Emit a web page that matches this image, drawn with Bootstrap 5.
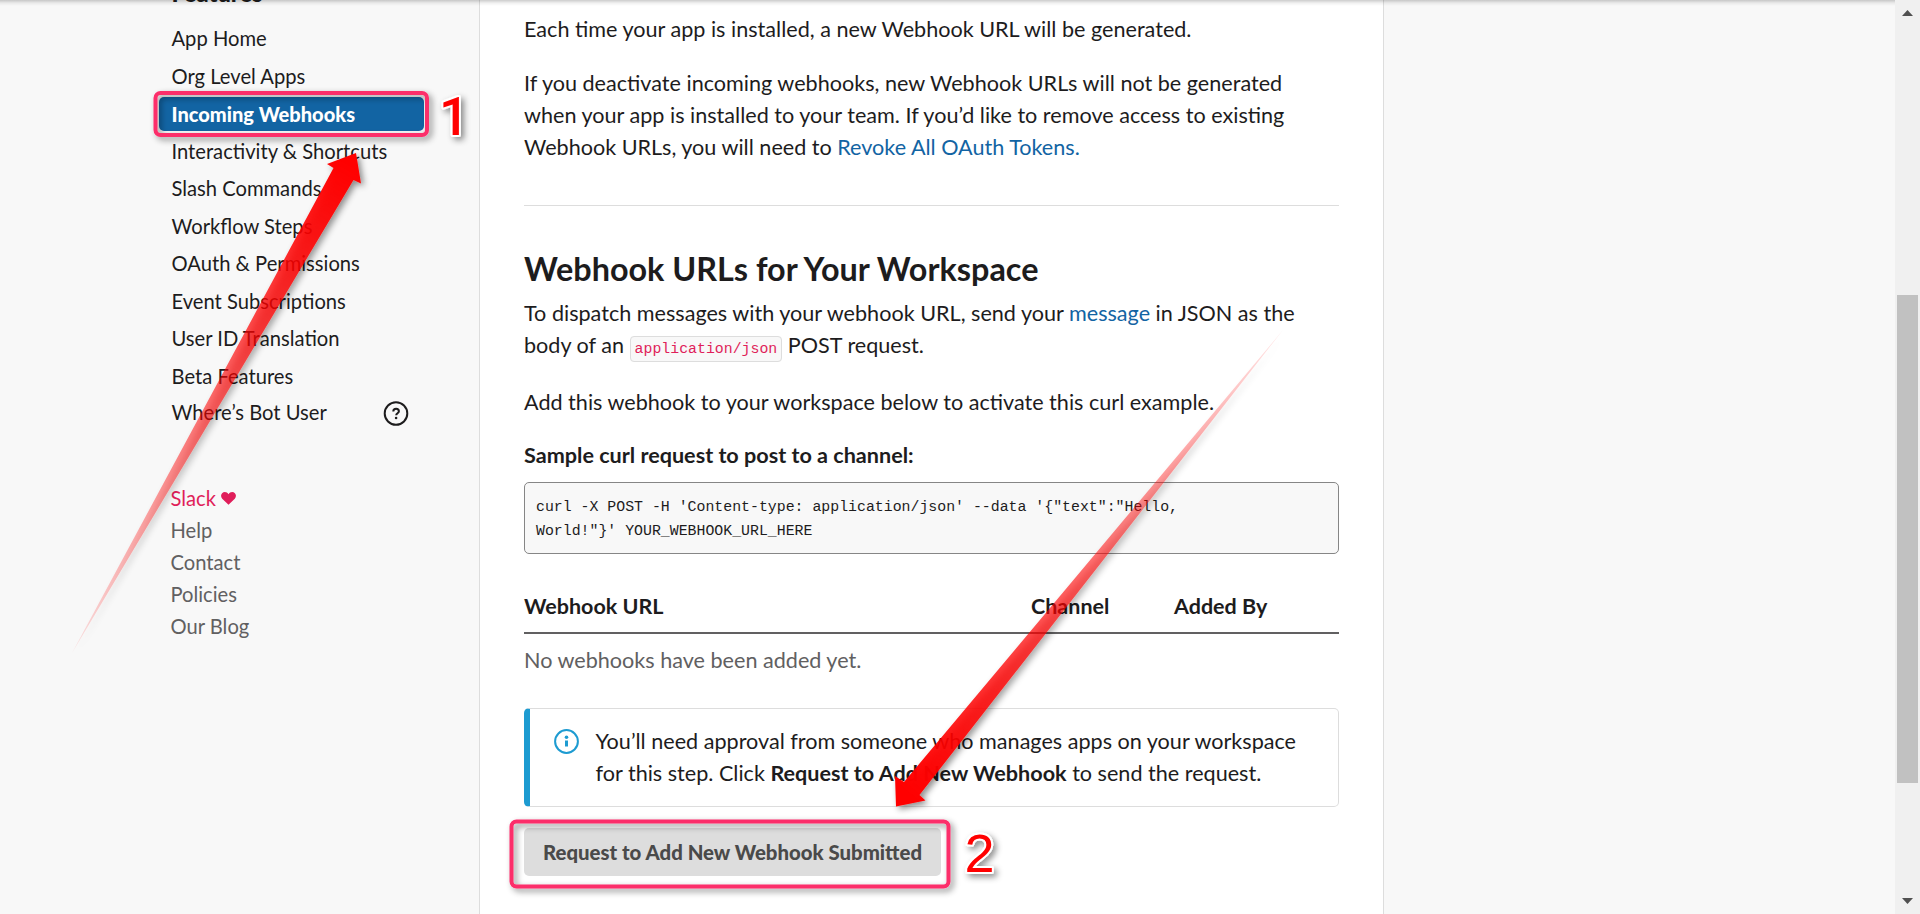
<!DOCTYPE html>
<html lang="en">
<head>
<meta charset="utf-8">
<meta name="viewport" content="width=device-width, initial-scale=1">
<title>Incoming Webhooks</title>
<link href="https://cdn.jsdelivr.net/npm/bootstrap@5.3.0/dist/css/bootstrap.min.css" rel="stylesheet">
<script src="https://cdn.jsdelivr.net/npm/bootstrap@5.3.0/dist/js/bootstrap.bundle.min.js"></script>
<style>
  body { font-family: Lato, "Liberation Sans", sans-serif; font-size: 21.6px; line-height: 32px; color: #1d1c1d; background: #f8f8f8; }
  a { color: #1264a3; text-decoration: none; }
  .app-view { height: 914px; }
  .top-shade { height: 6px; background: linear-gradient(rgba(0,0,0,.2), rgba(0,0,0,.06) 50%, rgba(0,0,0,0)); width: 1895px; }

  /* sidebar */
  .side-col { width: 479px; padding-left: 159px; }
  .side-heading { font-size: 23.7px; font-weight: 900; height: 23px; margin-top: -23px; padding-left: 12.5px; }
  .side-nav { width: 264.5px; font-size: 20.18px; padding-top: 21px; }
  .side-nav .nav-link { color: #1d1c1d; height: 34px; line-height: 35.5px; padding: 0 12.5px; margin-bottom: 3.5px; border-radius: 5px; }
  .side-nav .nav-link.active { color: #fff; background: #1264a3; font-weight: 900; font-size: 20.05px; line-height: 35px; margin-top: 1px; margin-bottom: 2.5px; }
  .side-nav svg { margin-right: 2px; position: relative; top: 1px; }
  .side-foot { padding-left: 11.5px; margin-top: 48px; font-size: 20.16px; }
  .side-foot a { color: #616061; }
  .side-foot .love { color: #e01e5a; }
  .side-foot svg { margin: 2px 0 0 5px; }

  /* content panel */
  .main-panel { width: 905px; padding: 13px 44px 0; background: #fff; border: solid #ddd; border-width: 0 1px; }
  .main-panel p { margin-bottom: 22px; }
  .main-panel .divider { margin: 42px 0 41px; border-top: 1.25px solid #ddd; opacity: 1; }
  .main-panel h2 { font-size: 32.36px; font-weight: 700; line-height: 44px; margin-bottom: 6px; }
  .main-panel .intro { margin-bottom: 21px; }
  .sub-title { font-weight: 700; font-size: 21.6px; margin-top: 21px; }
  .mono { font-family: "Liberation Mono", monospace; font-size: 14.86px; }
  code.mono { color: #e01e5a; background: #f8f8f8; border: 1px solid #ddd; border-radius: 4px; padding: 4px 4px 4px; }
  pre.mono { width: 815px; height: 72px; line-height: 24px; padding: 12px 11px 10px; margin: 11px 0 36px; background: #f8f8f8; border: 1px solid #868686; border-radius: 5px; color: #1d1c1d; }
  .hook-head { font-weight: 700; font-size: 21.5px; border-bottom: 2px solid #616061; padding-bottom: 10px; }
  .hook-head .c-url { width: 507px; }
  .hook-head .c-chan { width: 143px; }
  .muted { color: #616061; margin-top: 10px; }
  .notice { height: 99px; margin-top: 32px; border: 1px solid #ddd; border-left: 6px solid #1d9bd1; border-radius: 5px; padding: 16px 0 0 24px; }
  .notice svg { margin: 4px 16.500px 0 0; }
  .btn-sent, .btn-sent:disabled { width: 417px; height: 48px; margin-top: 21px; padding: 0; background: #ddd; color: #4a4a4a; border: 0; border-radius: 5px; opacity: 1; font-size: 20.38px; font-weight: 900; line-height: 46px; }

  .scroll-track { width: 25px; background: #f0f0f0; }
  .scroll-track svg { margin: 10px 0; }
  .scroll-thumb { width: 21px; height: 488px; margin-top: 269px; background: #c1c1c1; }
  .marks text { font-family: Roboto, sans-serif; font-size: 53px; font-weight: 500; }
  .marks .step-two { font-family: "Liberation Sans", sans-serif; font-size: 54px; font-weight: 400; }
</style>
</head>
<body class="overflow-hidden">
<div class="app-view d-flex position-relative overflow-hidden">
  <aside class="side-col flex-shrink-0">
    <div class="side-heading">Features</div>
    <nav class="side-nav nav flex-column flex-nowrap">
      <a class="nav-link" href="#">App Home</a>
      <a class="nav-link" href="#">Org Level Apps</a>
      <a class="nav-link active" href="#">Incoming Webhooks</a>
      <a class="nav-link" href="#">Interactivity &amp; Shortcuts</a>
      <a class="nav-link" href="#">Slash Commands</a>
      <a class="nav-link" href="#">Workflow Steps</a>
      <a class="nav-link" href="#">OAuth &amp; Permissions</a>
      <a class="nav-link" href="#">Event Subscriptions</a>
      <a class="nav-link" href="#">User ID Translation</a>
      <a class="nav-link" href="#">Beta Features</a>
      <a class="nav-link d-flex justify-content-between align-items-center" href="#">Where’s Bot User
        <svg width="26" height="26" viewBox="0 0 26 26" fill="none" stroke="#1d1c1d"><circle cx="13" cy="12.5" r="11.3" stroke-width="2"/><path d="M10.3 10.4c0-1.7 1-2.7 2.8-2.7s2.8.9 2.8 2.5c0 2-2.7 2-2.7 4" stroke-width="2"/><circle cx="13.1" cy="17" r="1.3" fill="#1d1c1d" stroke="none"/></svg>
      </a>
    </nav>
    <div class="side-foot d-flex flex-column">
      <a class="love d-flex align-items-center" href="#">Slack <svg width="15" height="13" viewBox="0 0 15 13"><path d="M7.5 12.8 1.2 6.8C-.3 5.2-.3 2.6 1.1 1.2 2.8-.5 6-.4 7.5 2.3 9-.4 12.2-.5 13.9 1.2c1.4 1.4 1.4 4-.1 5.6z" fill="#e01e5a"/></svg></a>
      <a href="#">Help</a>
      <a href="#">Contact</a>
      <a href="#">Policies</a>
      <a href="#">Our Blog</a>
    </div>
  </aside>

  <main class="main-panel flex-shrink-0">
    <p>Each time your app is installed, a new Webhook URL will be generated.</p>
    <p>If you deactivate incoming webhooks, new Webhook URLs will not be generated<br>when your app is installed to your team. If you’d like to remove access to existing<br>Webhook URLs, you will need to <a href="#">Revoke All OAuth Tokens.</a></p>
    <hr class="divider">
    <h2>Webhook URLs for Your Workspace</h2>
    <p class="intro">To dispatch messages with your webhook URL, send your <a href="#">message</a> in JSON as the<br>body of an <code class="mono">application/json</code> POST request.</p>
    <p class="mb-0">Add this webhook to your workspace below to activate this curl example.</p>
    <div class="sub-title">Sample curl request to post to a channel:</div>
    <pre class="mono">curl -X POST -H 'Content-type: application/json' --data '{"text":"Hello,
World!"}' YOUR_WEBHOOK_URL_HERE</pre>
    <div class="hook-head d-flex"><span class="c-url">Webhook URL</span><span class="c-chan">Channel</span><span>Added By</span></div>
    <div class="muted">No webhooks have been added yet.</div>
    <div class="notice d-flex align-items-start">
      <svg width="25" height="25" viewBox="0 0 25 25" fill="none"><circle cx="12.5" cy="12.5" r="11.4" stroke="#1d9bd1" stroke-width="2"/><circle cx="12.5" cy="8.2" r="1.8" fill="#1d9bd1"/><path d="M11 11.5h3v6h-3z" fill="#1d9bd1"/></svg>
      <div class="text-nowrap">You’ll need approval from someone who manages apps on your workspace<br>for this step. Click <b>Request to Add New Webhook</b> to send the request.</div>
    </div>
    <button class="btn btn-sent d-block" disabled>Request to Add New Webhook Submitted</button>
  </main>

  <div class="scroll-track d-flex flex-column align-items-center ms-auto flex-shrink-0">
    <svg class="flex-shrink-0" width="11" height="6" viewBox="0 0 11 6"><path d="M5.5 0 11 6H0z" fill="#505050"/></svg>
    <div class="scroll-thumb flex-shrink-0"></div>
    <svg class="mt-auto flex-shrink-0" width="11" height="6" viewBox="0 0 11 6"><path d="M5.5 6 11 0H0z" fill="#505050"/></svg>
  </div>

  <div class="top-shade position-absolute top-0 start-0"></div>

  <!-- annotations drawn over the page -->
  <svg class="marks position-absolute top-0 start-0" width="1920" height="914" viewBox="0 0 1920 914">
    <defs>
      <linearGradient id="fade1" gradientUnits="userSpaceOnUse" x1="350" y1="165" x2="73" y2="651"><stop offset="0" stop-color="#f00"/><stop offset="1" stop-color="#f00" stop-opacity=".1"/></linearGradient>
      <linearGradient id="fade2" gradientUnits="userSpaceOnUse" x1="905" y1="790" x2="1281" y2="332"><stop offset="0" stop-color="#f00"/><stop offset="1" stop-color="#f00" stop-opacity=".1"/></linearGradient>
      <filter id="cast" filterUnits="userSpaceOnUse" x="0" y="0" width="1920" height="914"><feDropShadow dx="3" dy="3" stdDeviation="3" flood-color="#000" flood-opacity=".45"/></filter>
    </defs>
    <g filter="url(#cast)" fill="none" stroke="#fc2d6b" stroke-width="4">
      <rect x="155.5" y="93" width="271.5" height="42" rx="5"/>
      <rect x="511.5" y="821.5" width="437" height="65" rx="5"/>
    </g>
    <g filter="url(#cast)">
      <path d="M356 153 327 164l6.5 4L72 653 353.5 180l7.5 3.5z" fill="url(#fade1)"/>
      <path d="M896 806.5 895 776l9 6L1283 330 919.5 795l6 5.500z" fill="url(#fade2)"/>
    </g>
    <g filter="url(#cast)" fill="#f00" stroke="#fff" stroke-width="4" stroke-linejoin="round" paint-order="stroke">
      <text x="439" y="135">1</text>
      <text class="step-two" x="964.5" y="872">2</text>
    </g>
  </svg>
</div>
</body>
</html>
